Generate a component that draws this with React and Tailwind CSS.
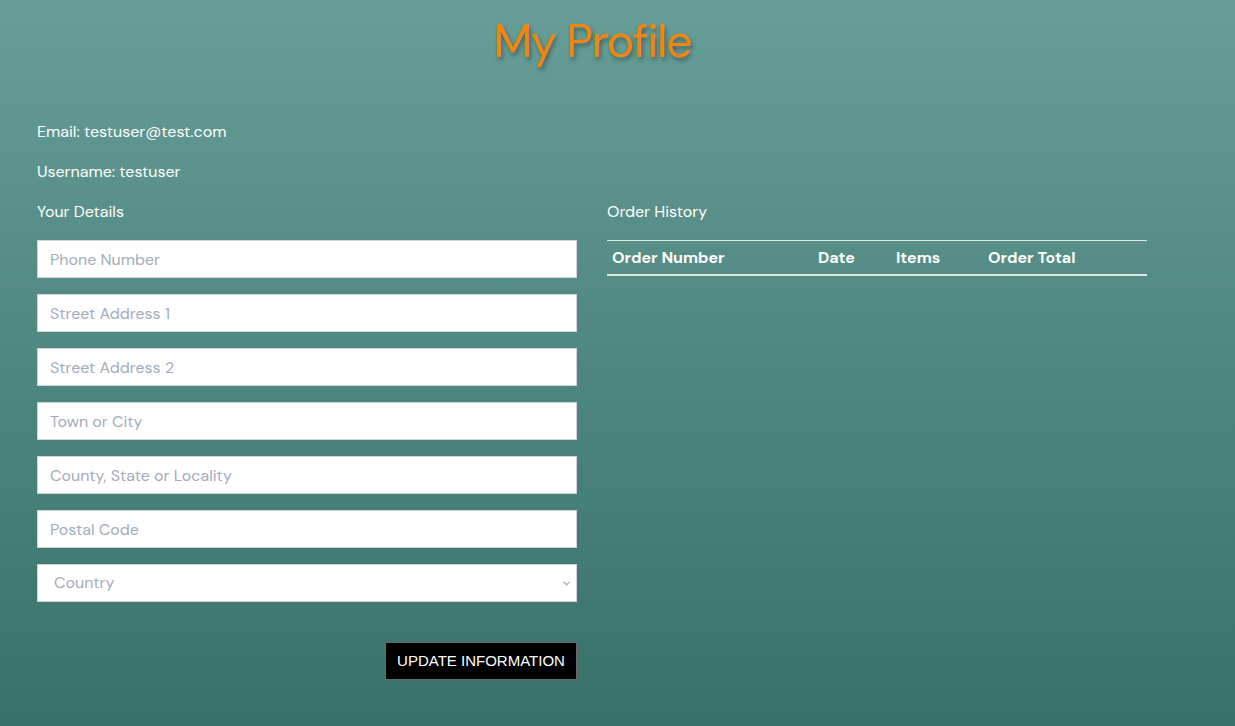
import { ChevronDown } from 'lucide-react';

const fields = [
  'Phone Number',
  'Street Address 1',
  'Street Address 2',
  'Town or City',
  'County, State or Locality',
  'Postal Code',
];

function App() {
  return (
    <div
      className="min-h-[726px] w-full bg-gradient-to-b from-[#679e97] to-[#36716a] text-white"
      style={{ fontFamily: '"DM Sans", Inter, "Noto Sans", sans-serif' }}
    >
      <div className="ml-[37px] w-[1110px] pt-[13px]">
        {/* Page title */}
        <h1 className="text-center text-[46px] leading-[56px] tracking-[-1.2px] text-[#ee8610] [text-shadow:2px_3px_4px_rgba(0,0,0,0.35)]">
          My Profile
        </h1>

        <div className="mt-[53px] text-[16px] leading-[20px]">
          <p>Email: testuser@test.com</p>
          <p className="mt-[20px]">Username: testuser</p>
        </div>

        <div className="mt-[20px] flex gap-[30px]">
          {/* Details form */}
          <div className="w-[540px]">
            <p className="text-[16px] leading-[20px]">Your Details</p>
            <div className="mt-[18px] flex flex-col gap-[16px]">
              {fields.map((f) => (
                <input
                  key={f}
                  placeholder={f}
                  className="h-[38px] w-full border border-[#ced4da] bg-white px-[12px] text-[16px] text-gray-800 placeholder:text-[#a3acb9] outline-none"
                />
              ))}
              <div className="flex h-[38px] w-full items-center justify-between border border-[#ced4da] bg-white pl-[16px] pr-[4px]">
                <span className="text-[16px] text-[#a3acb9]">Country</span>
                <ChevronDown className="h-[11px] w-[11px] text-[#a3acb9]" strokeWidth={3} />
              </div>
            </div>
            <div className="mt-[40px] flex justify-end">
              <button
                className="h-[38px] w-[192px] border border-[#6b6b6b] bg-black text-[15px] uppercase text-white"
                style={{ fontFamily: '"Liberation Sans", Arial, sans-serif' }}
              >
                Update Information
              </button>
            </div>
          </div>

          {/* Order history */}
          <div className="w-[540px]">
            <p className="text-[16px] leading-[20px]">Order History</p>
            <div className="mt-[18px] border-t border-[#e0e8e6] border-b-2">
              <div className="flex h-[33px] items-center text-[16px] font-bold">
                <span className="w-[211px] pl-[5px]">Order Number</span>
                <span className="w-[78px]">Date</span>
                <span className="w-[92px]">Items</span>
                <span>Order Total</span>
              </div>
            </div>
          </div>
        </div>
      </div>
    </div>
  );
}

export default App;
